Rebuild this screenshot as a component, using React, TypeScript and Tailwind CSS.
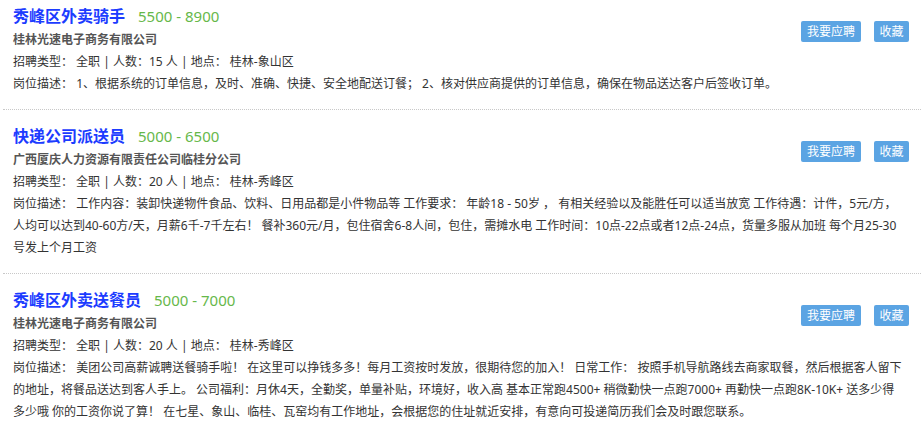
const jobs = [
  {
    title: "秀峰区外卖骑手",
    salary: "5500 - 8900",
    company: "桂林光速电子商务有限公司",
    count: 15,
    place: "桂林-象山区",
    desc: [
      "1、根据系统的订单信息，及时、准确、快捷、安全地配送订餐； 2、核对供应商提供的订单信息，确保在物品送达客户后签收订单。",
    ],
  },
  {
    title: "快递公司派送员",
    salary: "5000 - 6500",
    company: "广西厦庆人力资源有限责任公司临桂分公司",
    count: 20,
    place: "桂林-秀峰区",
    desc: [
      "工作内容：装卸快递物件食品、饮料、日用品都是小件物品等 工作要求： 年龄18 - 50岁 ， 有相关经验以及能胜任可以适当放宽 工作待遇：计件，5元/方，",
      "人均可以达到40-60方/天，月薪6千-7千左右！ 餐补360元/月，包住宿舍6-8人间，包住，需摊水电 工作时间：10点-22点或者12点-24点，货量多服从加班 每个月25-30",
      "号发上个月工资",
    ],
  },
  {
    title: "秀峰区外卖送餐员",
    salary: "5000 - 7000",
    company: "桂林光速电子商务有限公司",
    count: 20,
    place: "桂林-秀峰区",
    desc: [
      "美团公司高薪诚聘送餐骑手啦！ 在这里可以挣钱多多！每月工资按时发放，很期待您的加入！ 日常工作： 按照手机导航路线去商家取餐，然后根据客人留下",
      "的地址，将餐品送达到客人手上。 公司福利：月休4天，全勤奖，单量补贴，环境好，收入高 基本正常跑4500+ 稍微勤快一点跑7000+ 再勤快一点跑8K-10K+ 送多少得",
      "多少哦 你的工资你说了算！ 在七星、象山、临桂、瓦窑均有工作地址，会根据您的住址就近安排，有意向可投递简历我们会及时跟您联系。",
    ],
  },
]

export default function App() {
  return (
    <main
      className="w-[921px] h-[432px] overflow-hidden bg-white"
      style={{ fontFamily: '"Noto Sans", "Noto Sans CJK SC", sans-serif' }}
    >
      <div className="ml-[3px]">
        {jobs.map((job, i) => (
          <JobCard key={i} job={job} first={i === 0} />
        ))}
      </div>
    </main>
  )
}

function JobCard({ job, first }: { job: (typeof jobs)[number]; first: boolean }) {
  return (
    <div
      className={`px-[10px] pb-[14px] border-b border-dotted border-[#c8c8c8] ${first ? "pt-[3px]" : "pt-[13px]"}`}
    >
      <div className="float-right mt-[18px] flex gap-[13px] mr-[2px]">
        <button className="w-[60px] h-[21px] rounded-[2px] bg-[#5ba4e3] text-white text-[12px] leading-[21px] text-center">
          我要应聘
        </button>
        <button className="w-[35px] h-[21px] rounded-[2px] bg-[#5ba4e3] text-white text-[12px] leading-[21px] text-center">
          收藏
        </button>
      </div>
      <div className="flex items-center h-[26px]">
        <span className="text-[16px] font-bold text-[#1c3cff] leading-[26px]">{job.title}</span>
        <span className="ml-[13px] text-[15px] text-[#66b84a] leading-[26px]">{job.salary}</span>
      </div>
      <p className="text-[12px] leading-[22px] font-bold text-[#555]">{job.company}</p>
      <p className="text-[12px] leading-[22px] text-[#333]">
        招聘类型： 全职 | 人数：{job.count} 人 | 地点： {job.place}
      </p>
      <p className="text-[12px] leading-[22px] text-[#333]">
        岗位描述： {job.desc.map((line, j) => (
          <span key={j}>
            {j > 0 && <br />}
            {line}
          </span>
        ))}
      </p>
    </div>
  )
}
